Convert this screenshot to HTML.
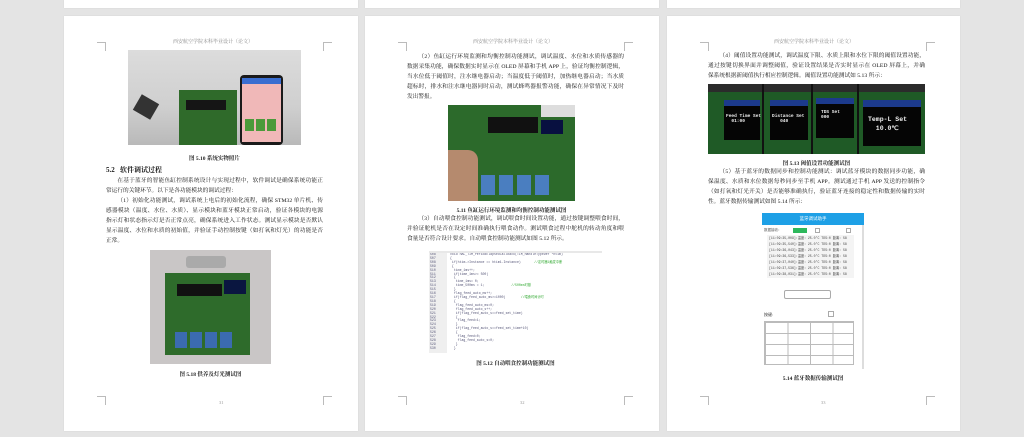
<!DOCTYPE html>
<html><head><meta charset="utf-8"><style>
*{margin:0;padding:0;box-sizing:border-box}
body{width:1024px;height:437px;background:#e4e4e4;position:relative;overflow:hidden;font-family:"Liberation Serif","Noto Serif CJK SC",serif;color:#222}
.pg{position:absolute;background:#fff;box-shadow:0 0 1px #ccc}
.a{position:absolute;white-space:nowrap}
.hd{font-size:5px;color:#888;text-align:center}
.t{font-size:5.7px;line-height:10px;color:#111;width:217px;white-space:normal}
.t div{text-align:justify;text-align-last:justify;height:10px;overflow:hidden;white-space:nowrap}
.t div.s{text-align-last:left}
.t div.i{padding-left:11.4px}
.cap{font-size:5.5px;font-weight:bold;text-align:center;color:#222}
.cm{position:absolute;width:9px;height:9px;border-color:#bbb;border-style:solid;border-width:0}
.num{font-size:4.5px;color:#999}
.code{font-family:"Liberation Mono",monospace;font-size:3.2px;line-height:3.9px;color:#557}
</style></head><body>
<div class="pg" style="left:64px;top:0;width:294px;height:8px"></div>
<div class="pg" style="left:365px;top:0;width:294px;height:8px"></div>
<div class="pg" style="left:667px;top:0;width:293px;height:8px"></div>

<!-- PAGE 1 -->
<div class="pg" style="left:64px;top:16px;width:294px;height:415px"></div>
<div class="cm" style="left:97px;top:42px;border-top-width:1px;border-right-width:1px"></div>
<div class="cm" style="left:323px;top:42px;border-top-width:1px;border-left-width:1px"></div>
<div class="a hd" style="left:150px;top:38px;width:126px">西安航空学院本科毕业设计（论文）</div>
<div class="a" style="left:128px;top:50px;width:173px;height:95px;background:linear-gradient(180deg,#dcdcdc,#cfcfcf 60%,#b9b9b9);overflow:hidden">
  <div class="a" style="left:51px;top:40px;width:58px;height:55px;background:#2f6a2a"></div>
  <div class="a" style="left:58px;top:50px;width:40px;height:10px;background:#151515"></div>
  <div class="a" style="left:8px;top:48px;width:20px;height:18px;background:#333;transform:rotate(30deg)"></div>
  <div class="a" style="left:112px;top:25px;width:43px;height:70px;background:#1a1a1a;border-radius:4px"></div>
  <div class="a" style="left:114px;top:28px;width:39px;height:64px;background:#f0b8b8"></div>
  <div class="a" style="left:114px;top:28px;width:39px;height:6px;background:#3a6ed0"></div>
  <div class="a" style="left:117px;top:69px;width:33px;height:12px;background:repeating-linear-gradient(90deg,#4a9a3a 0 9px,transparent 9px 11px)"></div>
</div>
<div class="a cap" style="left:128px;top:154px;width:173px">图 5.10  系统实物照片</div>
<div class="a" style="left:106px;top:165px;font-size:7px;font-weight:bold">5.2&nbsp;&nbsp;&nbsp;软件调试过程</div>
<div class="a t" style="left:106px;top:176px">
<div class="i">在基于蓝牙的智能鱼缸控制系统设计与实现过程中，软件调试是确保系统功能正</div>
<div class="s">常运行的关键环节。以下是各功能模块的调试过程：</div>
<div class="i">（1）初始化功能测试，调试系统上电后的初始化流程，确保 STM32 单片机、传</div>
<div>感器模块（温度、水位、水质）、显示模块和蓝牙模块正常启动，验证各模块的电源</div>
<div>指示灯和状态指示灯是否正常点亮，确保系统进入工作状态。测试显示模块是否默认</div>
<div>显示温度、水位和水质的初始值，并验证手动控制按键（如打氧和灯光）的功能是否</div>
<div class="s">正常。</div>
</div>
<div class="a" style="left:150px;top:250px;width:121px;height:114px;background:#c9c6c6;overflow:hidden">
  <div class="a" style="left:15px;top:23px;width:85px;height:82px;background:#2e6b2b"></div>
  <div class="a" style="left:27px;top:34px;width:45px;height:12px;background:#111"></div>
  <div class="a" style="left:74px;top:30px;width:22px;height:14px;background:#0a1640"></div>
  <div class="a" style="left:25px;top:82px;width:60px;height:16px;background:repeating-linear-gradient(90deg,#3b6bb0 0 12px,transparent 12px 15px)"></div>
  <div class="a" style="left:36px;top:6px;width:40px;height:12px;background:#aaa;border-radius:3px"></div>
</div>
<div class="a cap" style="left:150px;top:370px;width:121px">图 5.18  供养及灯光测试图</div>
<div class="cm" style="left:97px;top:396px;border-top-width:1px;border-right-width:1px"></div>
<div class="cm" style="left:323px;top:396px;border-top-width:1px;border-left-width:1px"></div>
<div class="a num" style="left:219px;top:400px">31</div>

<!-- PAGE 2 -->
<div class="pg" style="left:365px;top:16px;width:294px;height:415px"></div>
<div class="cm" style="left:398px;top:42px;border-top-width:1px;border-right-width:1px"></div>
<div class="cm" style="left:624px;top:42px;border-top-width:1px;border-left-width:1px"></div>
<div class="a hd" style="left:450px;top:38px;width:126px">西安航空学院本科毕业设计（论文）</div>
<div class="a t" style="left:407px;top:52px">
<div class="i">（2）鱼缸运行环境监测和均衡控制功能测试，调试温度、水位和水质传感器的</div>
<div>数据采集功能，确保数据实时显示在 OLED 屏幕和手机 APP 上，验证均衡控制逻辑，</div>
<div>当水位低于阈值时，注水继电器启动；当温度低于阈值时，加热继电器启动；当水质</div>
<div>超标时，排水和注水继电器同时启动，测试蜂鸣器报警功能，确保在异常情况下及时</div>
<div class="s">发出警报。</div>
</div>
<div class="a" style="left:448px;top:105px;width:127px;height:96px;background:#3a4a38;overflow:hidden">
  <div class="a" style="left:0;top:0;width:127px;height:96px;background:#2c6a2b"></div>
  <div class="a" style="left:40px;top:12px;width:50px;height:16px;background:#111"></div>
  <div class="a" style="left:93px;top:15px;width:22px;height:14px;background:#081040"></div>
  <div class="a" style="left:0;top:45px;width:30px;height:51px;background:#b58a6e;border-radius:0 10px 0 0"></div>
  <div class="a" style="left:33px;top:70px;width:68px;height:20px;background:repeating-linear-gradient(90deg,#4a7ec0 0 14px,transparent 14px 18px)"></div>
  <div class="a" style="left:93px;top:0;width:34px;height:12px;background:#ddd"></div>
</div>
<div class="a cap" style="left:448px;top:206px;width:127px">5.11 鱼缸运行环境监测和均衡控制功能测试图</div>
<div class="a t" style="left:407px;top:214px">
<div class="i">（3）自动喂食控制功能测试，调试喂食时间设置功能，通过按键调整喂食时间，</div>
<div>并验证舵机是否在设定时间准确执行喂食动作。测试喂食过程中舵机的转动角度和喂</div>
<div class="s">食量是否符合设计要求。自动喂食控制功能测试如图 5.12 所示。</div>
</div>
<div class="a" style="left:429px;top:251px;width:173px;height:102px;background:#fff;border-top:2px solid #e8e8e8;overflow:hidden">
  <div class="a" style="left:0;top:0;width:18px;height:102px;background:#efefef"></div>
  <div class="a code" style="left:1px;top:0">508<br>507<br>508<br>509<br>510<br>511<br>512<br>513<br>514<br>515<br>516<br>517<br>518<br>519<br>520<br>521<br>522<br>523<br>524<br>525<br>526<br>527<br>528<br>529<br>530</div>
  <div class="a code" style="left:21px;top:0">void HAL_TIM_PeriodElapsedCallback(TIM_HandleTypeDef *htim)<br>{<br>&nbsp;if(htim->Instance == htim1.Instance)&nbsp;&nbsp;&nbsp;&nbsp;&nbsp;&nbsp;&nbsp;<span style="color:#3a3">//定时器1触发中断</span><br>&nbsp;{<br>&nbsp;&nbsp;time_1ms++;<br>&nbsp;&nbsp;if(time_1ms&gt;= 500)<br>&nbsp;&nbsp;{<br>&nbsp;&nbsp;&nbsp;time_1ms= 0;<br>&nbsp;&nbsp;&nbsp;time_500ms = 1;&nbsp;&nbsp;&nbsp;&nbsp;&nbsp;&nbsp;&nbsp;&nbsp;&nbsp;&nbsp;&nbsp;&nbsp;&nbsp;&nbsp;<span style="color:#3a3">//500ms时基</span><br>&nbsp;&nbsp;}<br>&nbsp;&nbsp;flag_feed_auto_ms++;<br>&nbsp;&nbsp;if(flag_feed_auto_ms&gt;=1000)&nbsp;&nbsp;&nbsp;&nbsp;&nbsp;&nbsp;&nbsp;&nbsp;<span style="color:#3a3">//喂食时间计时</span><br>&nbsp;&nbsp;{<br>&nbsp;&nbsp;&nbsp;flag_feed_auto_ms=0;<br>&nbsp;&nbsp;&nbsp;flag_feed_auto_s++;<br>&nbsp;&nbsp;&nbsp;if(flag_feed_auto_s==feed_set_time)<br>&nbsp;&nbsp;&nbsp;{<br>&nbsp;&nbsp;&nbsp;&nbsp;flag_feed=1;<br>&nbsp;&nbsp;&nbsp;}<br>&nbsp;&nbsp;&nbsp;if(flag_feed_auto_s==feed_set_time+10)<br>&nbsp;&nbsp;&nbsp;{<br>&nbsp;&nbsp;&nbsp;&nbsp;flag_feed=0;<br>&nbsp;&nbsp;&nbsp;&nbsp;flag_feed_auto_s=0;<br>&nbsp;&nbsp;&nbsp;}<br>&nbsp;&nbsp;}</div>
</div>
<div class="a cap" style="left:429px;top:359px;width:173px">图 5.12 自动喂食控制功能测试图</div>
<div class="cm" style="left:398px;top:396px;border-top-width:1px;border-right-width:1px"></div>
<div class="cm" style="left:624px;top:396px;border-top-width:1px;border-left-width:1px"></div>
<div class="a num" style="left:520px;top:400px">32</div>

<!-- PAGE 3 -->
<div class="pg" style="left:667px;top:16px;width:293px;height:415px"></div>
<div class="cm" style="left:700px;top:42px;border-top-width:1px;border-right-width:1px"></div>
<div class="cm" style="left:926px;top:42px;border-top-width:1px;border-left-width:1px"></div>
<div class="a hd" style="left:751px;top:38px;width:126px">西安航空学院本科毕业设计（论文）</div>
<div class="a t" style="left:708px;top:51px">
<div class="i">（4）阈值设置功能测试，调试温度下限、水质上限和水位下限的阈值设置功能，</div>
<div>通过按键切换界面并调整阈值，验证设置结果是否实时显示在 OLED 屏幕上，并确</div>
<div class="s">保系统根据新阈值执行相应控制逻辑。阈值设置功能测试如 5.13 所示：</div>
</div>
<div class="a" style="left:708px;top:84px;width:217px;height:70px;background:#1f5a26;overflow:hidden;font-family:'Liberation Mono',monospace;color:#eee;font-weight:bold">
  <div class="a" style="left:0;top:0;width:217px;height:8px;background:#2b2b2b"></div>
  <div class="a" style="left:54px;top:0;width:2px;height:70px;background:#111"></div>
  <div class="a" style="left:103px;top:0;width:2px;height:70px;background:#111"></div>
  <div class="a" style="left:149px;top:0;width:2px;height:70px;background:#111"></div>
  <div class="a" style="left:16px;top:16px;width:36px;height:40px;background:#050505;border-top:6px solid #1c3a8c;font-size:4.5px;padding:8px 2px">Feed Time Set<br>&nbsp;&nbsp;01:00</div>
  <div class="a" style="left:62px;top:16px;width:38px;height:40px;background:#050505;border-top:6px solid #1c3a8c;font-size:4.5px;padding:8px 2px">Distance Set<br>&nbsp;&nbsp;&nbsp;040</div>
  <div class="a" style="left:108px;top:14px;width:38px;height:40px;background:#050505;border-top:6px solid #1c3a8c;font-size:4.5px;padding:6px 5px">TDS Set<br>000</div>
  <div class="a" style="left:155px;top:16px;width:58px;height:46px;background:#050505;border-top:7px solid #1c3a8c;font-size:6.5px;padding:8px 5px;line-height:9px">Temp-L Set<br>&nbsp;&nbsp;10.0℃</div>
</div>
<div class="a cap" style="left:708px;top:159px;width:217px">图 5.13 阈值设置功能测试图</div>
<div class="a t" style="left:708px;top:167px">
<div class="i">（5）基于蓝牙的数据同步和控制功能测试：调试蓝牙模块的数据同步功能，确</div>
<div>保温度、水质和水位数据每秒同步至手机 APP。测试通过手机 APP 发送的控制指令</div>
<div>（如打氧和灯光开关）是否能够准确执行，验证蓝牙连接的稳定性和数据传输的实时</div>
<div class="s">性。蓝牙数据传输测试如图 5.14 所示：</div>
</div>
<div class="a" style="left:762px;top:213px;width:102px;height:156px;background:#fff;border-right:2px solid #ddd;font-family:'Liberation Sans','Noto Sans CJK SC',sans-serif">
  <div class="a" style="left:0;top:0;width:102px;height:12px;background:#1ea0e6;color:#fff;font-size:4.5px;text-align:center;line-height:12px">蓝牙调试助手</div>
  <div class="a" style="left:2px;top:15px;font-size:3.5px;color:#555">数据接收：</div>
  <div class="a" style="left:31px;top:15px;width:14px;height:5px;background:#2eb85c"></div>
  <div class="a" style="left:53px;top:15px;width:5px;height:5px;border:1px solid #aaa"></div>
  <div class="a" style="left:84px;top:15px;width:5px;height:5px;border:1px solid #aaa"></div>
  <div class="a" style="left:5px;top:22px;width:87px;height:43px;background:#f4f4f4;font-family:'Liberation Mono','Noto Sans CJK SC',monospace;font-size:3.2px;line-height:6px;color:#444;padding-left:2px">[11:09:35,009]:温度: 25.0°C TDS:0 距离: 58<br>[11:09:35,540]:温度: 25.0°C TDS:0 距离: 58<br>[11:09:36,043]:温度: 25.0°C TDS:0 距离: 58<br>[11:09:36,533]:温度: 25.0°C TDS:0 距离: 58<br>[11:09:37,040]:温度: 25.0°C TDS:0 距离: 58<br>[11:09:37,536]:温度: 25.0°C TDS:0 距离: 58<br>[11:09:38,031]:温度: 25.0°C TDS:0 距离: 58</div>
  <div class="a" style="left:22px;top:77px;width:47px;height:9px;border:1px solid #aaa;border-radius:2px"></div>
  <div class="a" style="left:2px;top:99px;font-size:4px;color:#333">按键:</div>
  <div class="a" style="left:66px;top:98px;width:6px;height:6px;border:1px solid #aaa"></div>
  <div class="a" style="left:2px;top:108px;width:90px;height:44px;background:repeating-linear-gradient(90deg,#bbb 0 1px,transparent 1px 22.5px),repeating-linear-gradient(180deg,#bbb 0 1px,transparent 1px 11px);border:1px solid #bbb"></div>
</div>
<div class="a cap" style="left:762px;top:374px;width:102px">5.14  蓝牙数据传输测试图</div>
<div class="cm" style="left:700px;top:396px;border-top-width:1px;border-right-width:1px"></div>
<div class="cm" style="left:926px;top:396px;border-top-width:1px;border-left-width:1px"></div>
<div class="a num" style="left:821px;top:400px">33</div>
</body></html>
